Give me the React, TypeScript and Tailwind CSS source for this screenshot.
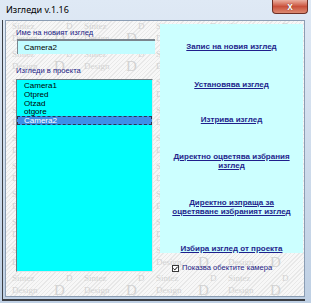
const views = ["Camera1", "Otpred", "Otzad", "otgore", "Camera2"];
const selected = "Camera2";

function Watermark() {
  const tiles = Array.from({ length: 44 });
  return (
    <div className="absolute inset-0 overflow-hidden pointer-events-none">
      <div className="flex flex-wrap w-[300px] -ml-[2px]">
        {tiles.map((_, i) => (
          <div key={i} className="relative w-[72px] h-[28px] font-['Liberation_Serif',serif] text-[#d2d2d2]">
            <span className="absolute left-[8px] top-[0px] text-[9px] leading-[10px]">Sintez</span>
            <span className="absolute left-[62px] top-[0px] text-[9px] leading-[10px]">D</span>
            <span className="absolute left-[8px] top-[12px] text-[9px] leading-[10px]">Design</span>
            <span className="absolute left-[50px] top-[9px] text-[15px] leading-[16px]">D</span>
          </div>
        ))}
      </div>
    </div>
  );
}

function LinkText({ children, className = "" }: { children: React.ReactNode; className?: string }) {
  return <div className={"underline decoration-1 underline-offset-[1px] " + className}>{children}</div>;
}

export default function App() {
  return (
    <div className="w-[311px] h-[303px] overflow-hidden flex flex-col bg-gradient-to-b from-[#dfe9f5] via-[#cfdcec] to-[#bfd0e4] font-['Liberation_Sans',sans-serif]">
      {/* title bar */}
      <div className="h-[20px] flex items-start justify-between">
        <span className="pl-[6px] pt-[4px] text-[9px] leading-[12px] text-black font-['Noto_Sans',sans-serif]">Изгледи v.1.16</span>
        <div className="mr-[3px] w-[36px] h-[14px] rounded-b-[4px] border border-t-0 border-[#6e2f25] bg-gradient-to-b from-[#eab0a2] via-[#c9503b] to-[#dc8a72] flex items-center justify-center">
          <span className="text-white font-bold text-[10px] leading-[10px] [text-shadow:0_0_1px_#5a1a10]">x</span>
        </div>
      </div>

      {/* frame body */}
      <div className="flex-1 flex ml-[2px] mr-[6px] mb-[2px] border-l border-b-2 border-[#3a3d42] pl-[2px] pb-[2px]">
        <div className="relative flex-1 flex border border-[#8b9db3] bg-[repeating-linear-gradient(135deg,#f7f7f7_0px,#f7f7f7_2px,#e8e8e8_2px,#e8e8e8_3px)]">
          <Watermark />

          {/* left column */}
          <div className="relative ml-[10px] w-[139px] flex flex-col pt-[7px]">
            <div className="text-[7.6px] leading-[10px] text-[#1b1b86]">Име на новият изглед</div>
            <div className="mt-[1px] ml-[1px] w-[138px] h-[15px] bg-[#c2fcff] border-t-2 border-l border-[#7a858e] pl-[6px] text-[8px] leading-[13px] text-black">
              Camera2
            </div>
            <div className="mt-[12px] text-[7.6px] leading-[10px] text-[#1b1b86]">Изгледи в проекта</div>
            <div className="mt-[3px] w-[137px] h-[193px] bg-[#00ffff] border border-t-[#6d7b80] border-l-[#6d7b80] border-r-[#dfe6e8] border-b-[#dfe6e8] pt-[1px]">
              {views.map((v) => (
                <div
                  key={v}
                  className={
                    v === selected
                      ? "h-[8.75px] pl-[6px] text-[8px] leading-[7px] text-white bg-[#3d8fe8] border border-dashed border-[#2a3550]"
                      : "h-[8.75px] pl-[6px] text-[8px] leading-[7px] text-black border border-transparent"
                  }
                >
                  {v}
                </div>
              ))}
            </div>
          </div>

          {/* right column */}
          <div className="relative ml-[5px] w-[143px] flex flex-col pt-[3px]">
            <div className="h-[229px] bg-[#ccffff] flex flex-col items-center pt-[18px] text-[8px] leading-[9px] font-bold text-[#1f1f8c] text-center">
              <LinkText>Запис на новия изглед</LinkText>
              <LinkText className="mt-[29px]">Установява изглед</LinkText>
              <LinkText className="mt-[26px]">Изтрива изглед</LinkText>
              <LinkText className="mt-[28px]">
                Директно оцветява избрания
                <br />
                изглед
              </LinkText>
              <LinkText className="mt-[28px]">
                Директно изпраща за
                <br />
                оцветяване избраният изглед
              </LinkText>
              <LinkText className="mt-[28px]">Избира изглед от проекта</LinkText>
            </div>
            <div className="mt-[10px] h-[10px] flex items-center pl-[12px]">
              <div className="w-[7px] h-[7px] bg-white border border-[#3a3a3a] flex items-center justify-center">
                <svg viewBox="0 0 7 7" className="w-[5px] h-[5px]">
                  <path d="M0.5 3.5 L2.5 5.5 L6.5 1" fill="none" stroke="#000" strokeWidth="1.4" />
                </svg>
              </div>
              <span className="ml-[3px] text-[7.6px] leading-[10px] text-[#1b1b86]">Показва обектите камера</span>
            </div>
          </div>
        </div>
      </div>
    </div>
  );
}
